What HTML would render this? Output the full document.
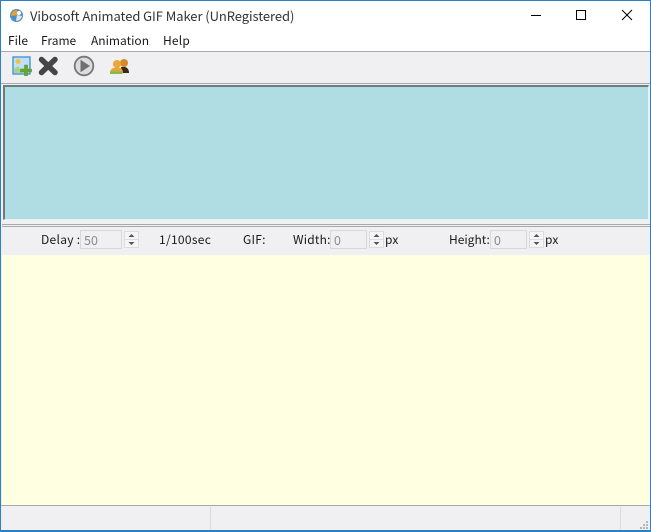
<!DOCTYPE html>
<html><head><meta charset="utf-8"><style>
html,body{margin:0;padding:0;width:651px;height:532px;overflow:hidden;background:#fff}
body{position:relative;font-family:"Noto Sans CJK SC","Liberation Sans",sans-serif;font-size:12px;color:#1a1a1a}
.a{position:absolute;box-sizing:border-box}
.t{position:absolute;white-space:nowrap;line-height:16px;height:16px}
.r{letter-spacing:.22px}
.inp{position:absolute;box-sizing:border-box;width:37px;height:19px;top:230px;background:#f0eff1;border:1px solid #d8d8d8;color:#8c8c8c;line-height:18px;padding-left:3px;font-size:12.500px}
.sp{position:absolute;top:231px;width:15px;height:17px}
</style></head><body>
<div class="a" style="left:0;top:0;width:651px;height:532px;background:#f0eff1"></div>
<div class="a" style="left:0;top:0;width:651px;height:52px;background:#fff"></div>
<!-- title icon -->
<svg class="a" style="left:9px;top:8px" width="15" height="15" viewBox="0 0 15 15"><circle cx="7.500" cy="7.500" r="6.500" fill="#4a90c8"/><path d="M2 8a6 6 0 0 1 6-6l1 5z" fill="#e8a030"/><path d="M8 7l5 1a6 6 0 0 1-6 5z" fill="#dfe8ee"/><circle cx="10" cy="5" r="2" fill="#fff"/></svg>
<div class="t" style="left:30px;top:8px;font-size:13px;color:#333;letter-spacing:-.07px">Vibosoft Animated GIF Maker (UnRegistered)</div>
<!-- window controls -->
<svg class="a" style="left:500px;top:0" width="151" height="30" viewBox="0 0 151 30"><path d="M31 15.500H41" stroke="#000" stroke-width="1"/><rect x="76.500" y="10.500" width="9" height="9" fill="none" stroke="#000"/><path d="M122 10L132 20M132 10L122 20" stroke="#000" stroke-width="1"/></svg>
<!-- menu -->
<div class="t" style="left:8px;top:33px">File</div>
<div class="t" style="left:41px;top:33px">Frame</div>
<div class="t" style="left:91px;top:33px">Animation</div>
<div class="t" style="left:163px;top:33px;letter-spacing:.2px">Help</div>
<div class="a" style="left:0;top:51px;width:651px;height:1px;background:#a9a9a9"></div>
<!-- toolbar icons -->
<svg class="a" style="left:12px;top:56px" width="20" height="20" viewBox="0 0 20 20"><rect x="1" y="1" width="17" height="17" fill="#bfe0f5" stroke="#3d8fd0" stroke-width="1.300"/><path d="M2 17V13l4-3 5 7z" fill="#a9d18a"/><circle cx="6" cy="5.500" r="2.500" fill="#f0c040"/><path d="M12.500 9h3v4h4v3h-4v4h-3v-4H8.500v-3h4z" fill="#62a832" stroke="#4f8f28" stroke-width=".5"/></svg>
<svg class="a" style="left:38px;top:56px" width="21" height="20" viewBox="0 0 21 20"><path d="M3.500 3.500L17 16.500M17 3.500L3.500 16.500" stroke="#454545" stroke-width="5.500" stroke-linecap="round"/></svg>
<svg class="a" style="left:73px;top:55px" width="22" height="22" viewBox="0 0 22 22"><circle cx="11" cy="11" r="9.300" fill="#dcdcdc" stroke="#777" stroke-width="1.800"/><path d="M7.500 4.800L17 11L7.500 17.200z" fill="#707070"/></svg>
<svg class="a" style="left:110px;top:58px" width="20" height="17" viewBox="0 0 20 17"><circle cx="14" cy="5" r="4" fill="#d98a28"/><path d="M11 9l1 6h7c0-3-1-5-4-6z" fill="#3a2a14"/><path d="M10 5c0 2-1 4-3 4" fill="none"/><circle cx="7" cy="6" r="4" fill="#eda63a"/><path d="M0 15c0-4 3-5.500 7-5.500s6 1.500 6 5.500z" fill="#e8a238"/><path d="M0 13.500h12.500V16H0z" fill="#7cc04a"/></svg>
<div class="a" style="left:0;top:83px;width:651px;height:1px;background:#a9a9a9"></div>
<!-- blue panel -->
<div class="a" style="left:3px;top:85px;width:646px;height:135px;background:#b0dce3;border-top:2px solid #6f7c7e;border-left:2px solid #6f7c7e;border-right:1px solid #e4f1f3;border-bottom:1px solid #e4f1f3"></div>
<div class="a" style="left:2px;top:224px;width:648px;height:1px;background:#a9a9a9"></div>
<div class="a" style="left:2px;top:226px;width:648px;height:1px;background:#a9a9a9"></div>
<!-- delay row -->
<div class="t r" style="left:41px;top:232px;letter-spacing:.3px">Delay :</div>
<div class="inp" style="left:80px;width:42px">50</div>
<svg class="sp" style="left:124px" viewBox="0 0 15 17"><rect x=".5" y=".5" width="14" height="16" fill="#f5f5f5" stroke="#dcdcdc"/><path d="M1 8.500H14" stroke="#dcdcdc"/><path d="M4.500 6L7.500 3L10.500 6z" fill="#555"/><path d="M4.500 11L7.500 14L10.500 11z" fill="#555"/></svg>
<div class="t r" style="left:159px;top:232px;letter-spacing:.3px">1/100sec</div>
<div class="t r" style="left:243px;top:232px">GIF:</div>
<div class="t r" style="left:293px;top:232px">Width:</div>
<div class="inp" style="left:330px">0</div>
<svg class="sp" style="left:369px" viewBox="0 0 15 17"><rect x=".5" y=".5" width="14" height="16" fill="#f5f5f5" stroke="#dcdcdc"/><path d="M1 8.500H14" stroke="#dcdcdc"/><path d="M4.500 6L7.500 3L10.500 6z" fill="#555"/><path d="M4.500 11L7.500 14L10.500 11z" fill="#555"/></svg>
<div class="t r" style="left:385px;top:232px">px</div>
<div class="t" style="left:449px;top:232px">Height:</div>
<div class="inp" style="left:490px">0</div>
<svg class="sp" style="left:529px" viewBox="0 0 15 17"><rect x=".5" y=".5" width="14" height="16" fill="#f5f5f5" stroke="#dcdcdc"/><path d="M1 8.500H14" stroke="#dcdcdc"/><path d="M4.500 6L7.500 3L10.500 6z" fill="#555"/><path d="M4.500 11L7.500 14L10.500 11z" fill="#555"/></svg>
<div class="t r" style="left:545px;top:232px">px</div>
<!-- yellow -->
<div class="a" style="left:2px;top:255px;width:648px;height:250px;background:#ffffe1"></div>
<div class="a" style="left:0;top:505px;width:651px;height:1px;background:#a9a9a9"></div>
<!-- status -->
<div class="a" style="left:210px;top:507px;width:1px;height:23px;background:#dcdbdd"></div>
<div class="a" style="left:620px;top:507px;width:1px;height:23px;background:#dcdbdd"></div>
<svg class="a" style="left:639px;top:520px" width="10" height="10" viewBox="0 0 10 10" fill="#b5b5b5"><rect x="7" y="1" width="2" height="2"/><rect x="4" y="4" width="2" height="2"/><rect x="7" y="4" width="2" height="2"/><rect x="1" y="7" width="2" height="2"/><rect x="4" y="7" width="2" height="2"/><rect x="7" y="7" width="2" height="2"/></svg>
<!-- window border -->
<div class="a" style="left:0;top:0;width:651px;height:532px;border:1px solid #2b7fc4;border-bottom-width:2px"></div>
</body></html>
